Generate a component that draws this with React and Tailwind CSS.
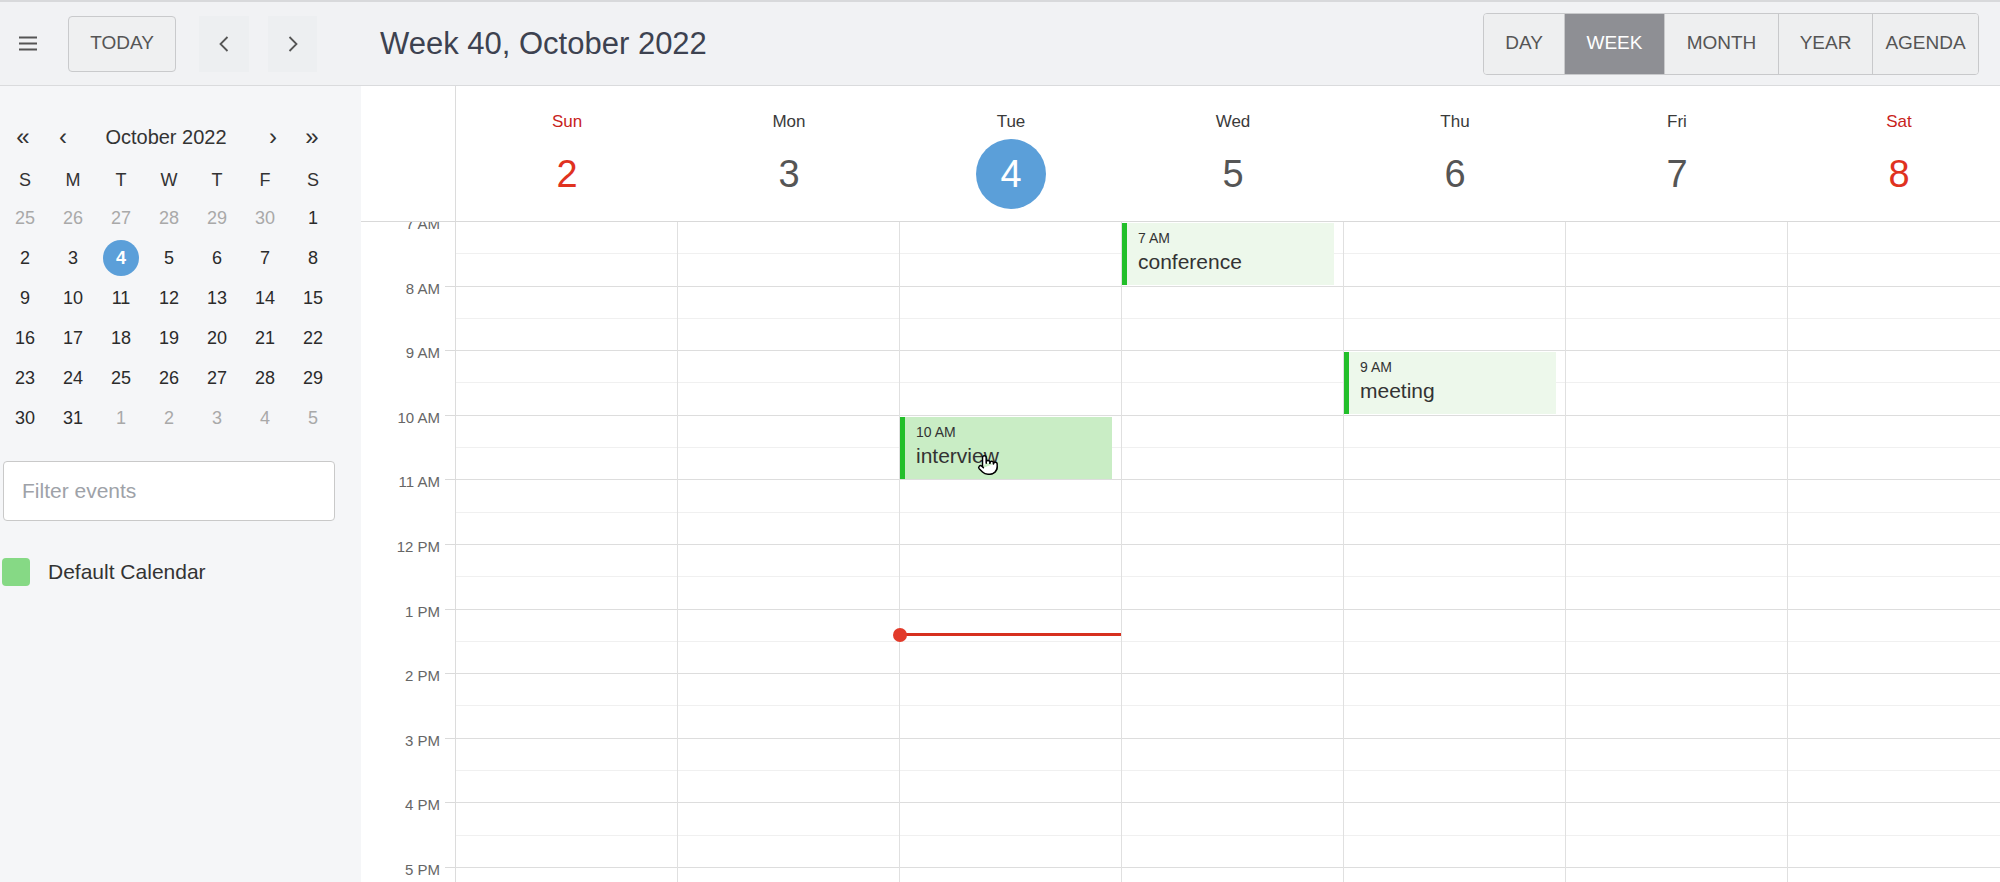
import React from "react";
import { Pointer } from "lucide-react";

const days = [
  { name: "Sun", num: 2, weekend: true },
  { name: "Mon", num: 3 },
  { name: "Tue", num: 4, today: true },
  { name: "Wed", num: 5 },
  { name: "Thu", num: 6 },
  { name: "Fri", num: 7 },
  { name: "Sat", num: 8, weekend: true },
];

const hours = ["7 AM", "8 AM", "9 AM", "10 AM", "11 AM", "12 PM", "1 PM", "2 PM", "3 PM", "4 PM", "5 PM", ""];

const miniRows = [
  [[25, 1], [26, 1], [27, 1], [28, 1], [29, 1], [30, 1], [1, 0]],
  [[2, 0], [3, 0], [4, 0], [5, 0], [6, 0], [7, 0], [8, 0]],
  [[9, 0], [10, 0], [11, 0], [12, 0], [13, 0], [14, 0], [15, 0]],
  [[16, 0], [17, 0], [18, 0], [19, 0], [20, 0], [21, 0], [22, 0]],
  [[23, 0], [24, 0], [25, 0], [26, 0], [27, 0], [28, 0], [29, 0]],
  [[30, 0], [31, 0], [1, 1], [2, 1], [3, 1], [4, 1], [5, 1]],
];

const events = {
  2: [{ top: 195, time: "10 AM", title: "interview", hover: true }],
  3: [{ top: 1, time: "7 AM", title: "conference" }],
  4: [{ top: 130, time: "9 AM", title: "meeting" }],
};

function Event({ ev }) {
  return (
    <div
      className={
        "absolute left-0 w-[212px] h-[62px] border-l-[5px] border-[#22bf2a] pl-[11px] pt-[6px] z-10 " +
        (ev.hover ? "bg-[#c9edc5]" : "bg-[#edf8eb]")
      }
      style={{ top: ev.top }}
    >
      <div className="text-[14px] leading-[18px] text-[#333]">{ev.time}</div>
      <div className="text-[21px] leading-[26px] mt-[2px] text-[#333]">{ev.title}</div>
      {ev.hover && (
        <Pointer className="absolute left-[72px] top-[37px] text-black" size={22} strokeWidth={1.6} fill="white" />
      )}
    </div>
  );
}

export default function App() {
  return (
    <div className="w-[2000px] h-[882px] overflow-hidden flex flex-col bg-white font-['Liberation_Sans',Arial,sans-serif] text-[#333]">
      {/* Top bar */}
      <div className="h-[86px] shrink-0 flex items-center bg-[#f1f2f4] border-t-2 border-b border-t-[#d8d9db] border-b-[#dadbdd]">
        <div className="w-[55px] h-full flex items-center justify-center">
          <svg width="18" height="15" viewBox="0 0 18 15">
            <line x1="0" y1="1.5" x2="18" y2="1.5" stroke="#555" strokeWidth="2" />
            <line x1="0" y1="7.5" x2="18" y2="7.5" stroke="#555" strokeWidth="2" />
            <line x1="0" y1="13.5" x2="18" y2="13.5" stroke="#555" strokeWidth="2" />
          </svg>
        </div>
        <button className="ml-[13px] w-[108px] h-[56px] border border-[#c9cacc] rounded-[4px] bg-[#eff0f1] text-[19px] text-[#555] flex items-center justify-center">
          TODAY
        </button>
        <button className="ml-[23px] w-[50px] h-[56px] bg-[#edeff1] flex items-center justify-center">
          <svg width="10" height="16" viewBox="0 0 10 16">
            <polyline points="8.5,1 1.5,8 8.5,15" fill="none" stroke="#555" strokeWidth="1.8" />
          </svg>
        </button>
        <button className="ml-[19px] w-[49px] h-[56px] bg-[#edeff1] flex items-center justify-center">
          <svg width="10" height="16" viewBox="0 0 10 16">
            <polyline points="1.5,1 8.5,8 1.5,15" fill="none" stroke="#555" strokeWidth="1.8" />
          </svg>
        </button>
        <div className="ml-[63px] text-[31px] text-[#3d4250] leading-none">Week 40, October 2022</div>
        <div className="ml-auto mr-[21px] flex h-[62px] rounded-[4px] border border-[#c8c9cb] overflow-hidden text-[19px]">
          <div className="w-[80px] flex items-center justify-center bg-[#eeeff0] text-[#555]">DAY</div>
          <div className="w-[100px] flex items-center justify-center bg-[#8e8f94] text-white border-l border-[#c8c9cb]">WEEK</div>
          <div className="w-[114px] flex items-center justify-center bg-[#eeeff0] text-[#555] border-l border-[#c8c9cb]">MONTH</div>
          <div className="w-[94px] flex items-center justify-center bg-[#eeeff0] text-[#555] border-l border-[#c8c9cb]">YEAR</div>
          <div className="w-[106px] flex items-center justify-center bg-[#eeeff0] text-[#555] border-l border-[#c8c9cb]">AGENDA</div>
        </div>
      </div>

      <div className="flex flex-1 min-h-0">
        {/* Sidebar */}
        <div className="w-[361px] shrink-0 bg-[#f5f6f8] flex flex-col">
          <div className="mt-[31px] h-[40px] flex items-center text-[#333]">
            <div className="w-[46px] text-center text-[24px] leading-none">«</div>
            <div className="w-[34px] text-center text-[24px] leading-none">‹</div>
            <div className="w-[172px] text-center text-[20px] leading-none">October 2022</div>
            <div className="w-[42px] text-center text-[24px] leading-none">›</div>
            <div className="w-[36px] text-center text-[24px] leading-none">»</div>
          </div>
          <div className="ml-[1px] w-[336px] mt-[5px]">
            <div className="grid grid-cols-7 h-[36px] items-center text-[18px] text-[#333]">
              {["S", "M", "T", "W", "T", "F", "S"].map((d, i) => (
                <div key={i} className="text-center">{d}</div>
              ))}
            </div>
            {miniRows.map((row, ri) => (
              <div key={ri} className="grid grid-cols-7 h-[40px] items-center text-[18px]">
                {row.map(([n, other], ci) => (
                  <div key={ci} className="flex justify-center">
                    {ri === 1 && n === 4 ? (
                      <div className="w-[36px] h-[36px] rounded-full bg-[#5b9fd9] text-white font-semibold flex items-center justify-center">
                        4
                      </div>
                    ) : (
                      <span className={other ? "text-[#a9a9a9]" : "text-[#2b2b2b]"}>{n}</span>
                    )}
                  </div>
                ))}
              </div>
            ))}
          </div>
          <div className="ml-[3px] mt-[23px] w-[332px] h-[60px] bg-white border border-[#c9c9c9] rounded-[4px] flex items-center pl-[18px] text-[21px] text-[#9ea2a8]">
            Filter events
          </div>
          <div className="ml-[2px] mt-[35px] flex items-center">
            <div className="w-[28px] h-[28px] rounded-[4px] bg-[#86d985]" />
            <div className="ml-[18px] text-[21px] text-[#333]">Default Calendar</div>
          </div>
        </div>

        {/* Main calendar */}
        <div className="flex-1 min-w-0 overflow-hidden flex flex-col bg-white">
          <div className="w-[1649px] h-[136px] shrink-0 flex border-b border-[#d9d9d9]">
            <div className="w-[95px] shrink-0 border-r border-[#dcdcdc]" />
            {days.map((d) => (
              <div key={d.name} className="w-[222px] shrink-0 flex flex-col items-center pt-[25px]">
                <div className={"text-[17px] leading-[22px] " + (d.weekend ? "text-[#c8231b]" : "text-[#3a3a3a]")}>{d.name}</div>
                {d.today ? (
                  <div className="mt-[6px] w-[70px] h-[70px] rounded-full bg-[#5b9fd9] text-white text-[38px] flex items-center justify-center">
                    {d.num}
                  </div>
                ) : (
                  <div className={"mt-[6px] h-[70px] flex items-center text-[38px] " + (d.weekend ? "text-[#e0321f]" : "text-[#555]")}>
                    {d.num}
                  </div>
                )}
              </div>
            ))}
          </div>

          <div className="w-[1649px] flex-1 min-h-0 overflow-hidden flex">
            <div className="w-[95px] shrink-0 border-r border-[#dcdcdc] flex flex-col">
              {hours.map((h, i) => (
                <div key={i} className="relative h-[64.6px] shrink-0">
                  {h && (
                    <span className="absolute right-[15px] top-[1px] -translate-y-1/2 text-[15px] leading-none text-[#666] whitespace-nowrap">
                      {h}
                    </span>
                  )}
                  <div className="absolute right-0 bottom-0 w-[10px] h-px bg-[#dadada]" />
                </div>
              ))}
            </div>
            {days.map((d, di) => (
              <div key={d.name} className="relative w-[222px] shrink-0 border-r border-[#e0e0e0] flex flex-col">
                {hours.map((h, i) => (
                  <div key={i} className="h-[64.6px] shrink-0 border-b border-[#dddddd] flex flex-col">
                    <div className="flex-1 border-b border-[#f0f0f0]" />
                    <div className="flex-1" />
                  </div>
                ))}
                {(events[di] || []).map((ev) => (
                  <Event key={ev.title} ev={ev} />
                ))}
                {d.today && (
                  <>
                    <div className="absolute left-0 right-0 top-[411px] h-[3px] bg-[#d6301f] z-10" />
                    <div className="absolute left-[-7px] top-[405.5px] w-[14px] h-[14px] rounded-full bg-[#e23a2a] z-20" />
                  </>
                )}
              </div>
            ))}
          </div>
        </div>
      </div>
    </div>
  );
}
